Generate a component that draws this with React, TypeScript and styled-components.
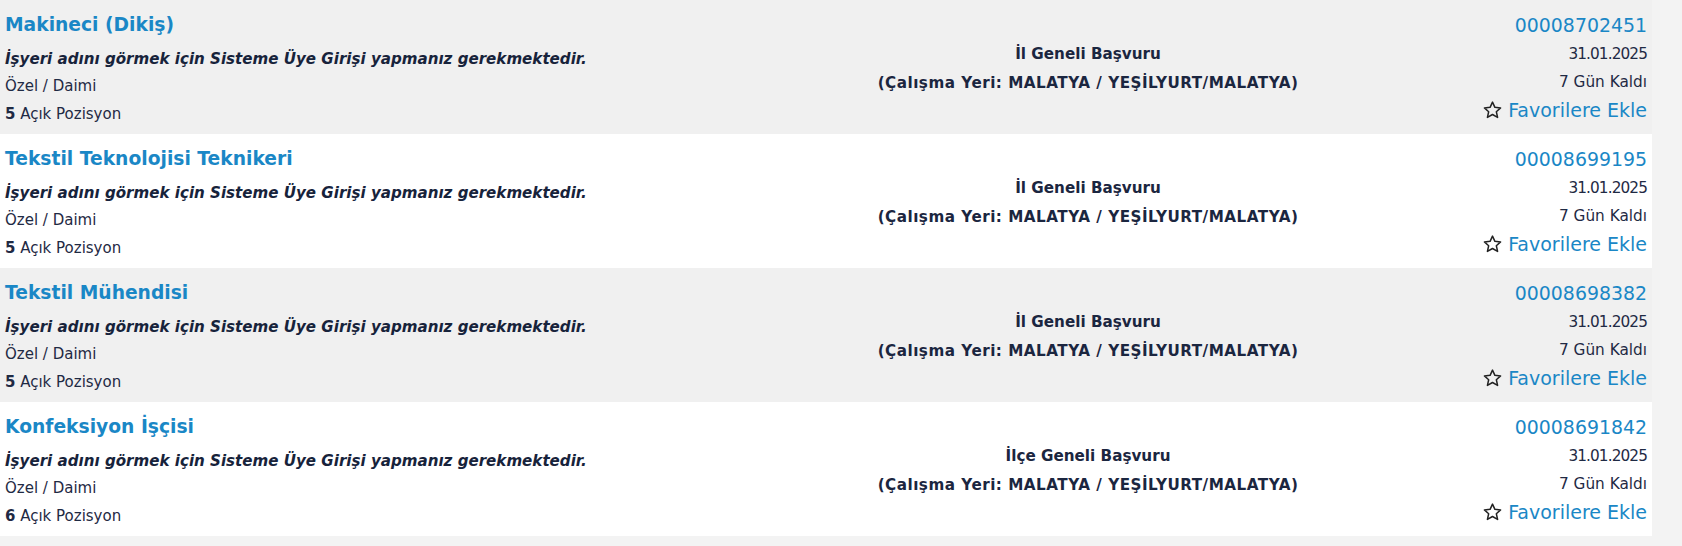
import React from "react";
import styled, { createGlobalStyle } from "styled-components";

const Global = createGlobalStyle`
  html, body { margin: 0; padding: 0; }
  body {
    background: #f3f3f3;
    font-family: "DejaVu Sans", Verdana, sans-serif;
    overflow: hidden;
  }
`;

const List = styled.div`
  width: 1652px;
  display: flex;
  flex-direction: column;
`;

const Row = styled.div<{ $alt: boolean }>`
  display: grid;
  grid-template-columns: 821px 524px 1fr;
  height: 134px;
  box-sizing: border-box;
  padding: 13px 5px 0 5px;
  background: ${(p) => (p.$alt ? "#ffffff" : "#f0f0f0")};
`;

const Left = styled.div`
  display: flex;
  flex-direction: column;
  align-items: flex-start;
`;

const Title = styled.a`
  color: #1a87c6;
  font-weight: bold;
  font-size: 18.7px;
  line-height: 24px;
  text-decoration: none;
  margin-bottom: 12px;
`;

const Notice = styled.div`
  font-style: italic;
  font-weight: bold;
  font-size: 15.1px;
  line-height: 20px;
  color: #17233b;
  margin-bottom: 7px;
`;

const Small = styled.div`
  font-size: 15px;
  line-height: 20px;
  color: #1f2a44;
  margin-bottom: 8px;
  b { font-weight: bold; }
`;

const Middle = styled.div`
  display: flex;
  flex-direction: column;
  align-items: center;
  padding-top: 31px;
  gap: 8.5px;
`;

const MidLine = styled.div<{ $spacing?: number }>`
  font-weight: bold;
  font-size: 15.2px;
  line-height: 20px;
  color: #1b2640;
  white-space: nowrap;
  letter-spacing: ${(p) => p.$spacing ?? 0}px;
`;

const Right = styled.div`
  display: flex;
  flex-direction: column;
  align-items: flex-end;
`;

const Code = styled.a`
  color: #1a87c6;
  font-size: 18.9px;
  line-height: 24px;
  text-decoration: none;
  margin-bottom: 6.5px;
`;

const RightText = styled.div<{ $spacing?: number }>`
  font-size: 15.3px;
  line-height: 20px;
  color: #1f2a44;
  margin-bottom: 8px;
  letter-spacing: ${(p) => p.$spacing ?? 0}px;
`;

const Fav = styled.a`
  display: flex;
  align-items: center;
  gap: 5px;
  color: #1a87c6;
  font-size: 19px;
  line-height: 22px;
  text-decoration: none;
  margin-top: -0.5px;
`;

const StarIcon = () => (
  <svg width="21" height="20" viewBox="0 0 24 24" fill="none" stroke="#222" strokeWidth="1.8" strokeLinejoin="round">
    <path d="M12 2.5l2.9 6.3 6.8.7-5.1 4.6 1.5 6.8L12 17.4l-6.1 3.5 1.5-6.8-5.1-4.6 6.8-.7z" />
  </svg>
);

type Job = { title: string; scope: string; type: string; count: number; code: string };

const jobs: Job[] = [
  { title: "Makineci (Dikiş)", scope: "İl Geneli Başvuru", type: "Özel / Daimi", count: 5, code: "00008702451" },
  { title: "Tekstil Teknolojisi Teknikeri", scope: "İl Geneli Başvuru", type: "Özel / Daimi", count: 5, code: "00008699195" },
  { title: "Tekstil Mühendisi", scope: "İl Geneli Başvuru", type: "Özel / Daimi", count: 5, code: "00008698382" },
  { title: "Konfeksiyon İşçisi", scope: "İlçe Geneli Başvuru", type: "Özel / Daimi", count: 6, code: "00008691842" },
];

export default function App() {
  return (
    <>
      <Global />
      <List>
        {jobs.map((j, i) => (
          <Row key={j.code} $alt={i % 2 === 1}>
            <Left>
              <Title href="#">{j.title}</Title>
              <Notice>İşyeri adını görmek için Sisteme Üye Girişi yapmanız gerekmektedir.</Notice>
              <Small>{j.type}</Small>
              <Small>
                <b>{j.count}</b> Açık Pozisyon
              </Small>
            </Left>
            <Middle>
              <MidLine>{j.scope}</MidLine>
              <MidLine $spacing={0.5}>(Çalışma Yeri: MALATYA / YEŞİLYURT/MALATYA)</MidLine>
            </Middle>
            <Right>
              <Code href="#">{j.code}</Code>
              <RightText $spacing={-0.9}>31.01.2025</RightText>
              <RightText>7 Gün Kaldı</RightText>
              <Fav href="#">
                <StarIcon />
                Favorilere Ekle
              </Fav>
            </Right>
          </Row>
        ))}
      </List>
    </>
  );
}
